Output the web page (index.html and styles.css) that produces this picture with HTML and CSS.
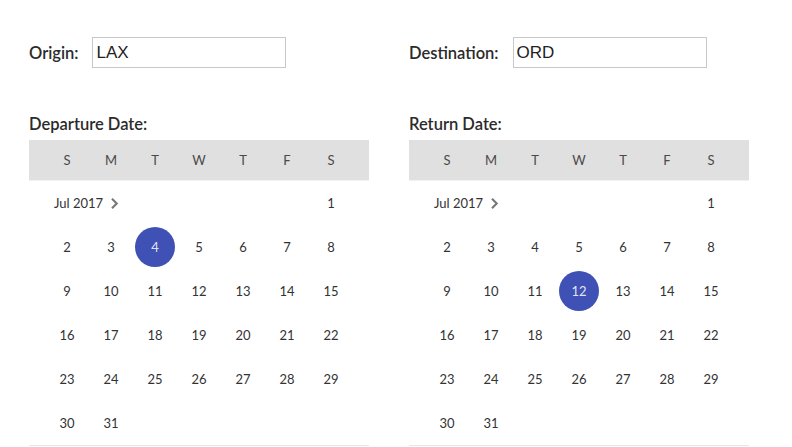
FILE: index.html
```html
<!DOCTYPE html>
<html>
<head>
<meta charset="utf-8">
<link rel="stylesheet" href="styles.css">
</head>
<body>
<div class="page">
  <div class="col">
    <div class="field">
      <label class="field-label">Origin:</label>
      <div class="input">LAX</div>
    </div>
    <div class="date-label">Departure Date:</div>
    <div class="cal">
      <div class="cal-head">
        <span>S</span><span>M</span><span>T</span><span>W</span><span>T</span><span>F</span><span>S</span>
      </div>
      <div class="cal-body">
        <div class="month">Jul 2017 <svg class="chev" width="9" height="13" viewBox="0 0 9 13"><path d="M2 1.8 L6.7 6.5 L2 11.2" fill="none" stroke="#777" stroke-width="2.1"/></svg></div>
        <span>1</span>
        <span>2</span><span>3</span><span class="sel">4</span><span>5</span><span>6</span><span>7</span><span>8</span>
        <span>9</span><span>10</span><span>11</span><span>12</span><span>13</span><span>14</span><span>15</span>
        <span>16</span><span>17</span><span>18</span><span>19</span><span>20</span><span>21</span><span>22</span>
        <span>23</span><span>24</span><span>25</span><span>26</span><span>27</span><span>28</span><span>29</span>
        <span>30</span><span>31</span>
      </div>
    </div>
  </div>
  <div class="col">
    <div class="field">
      <label class="field-label">Destination:</label>
      <div class="input">ORD</div>
    </div>
    <div class="date-label">Return Date:</div>
    <div class="cal">
      <div class="cal-head">
        <span>S</span><span>M</span><span>T</span><span>W</span><span>T</span><span>F</span><span>S</span>
      </div>
      <div class="cal-body">
        <div class="month">Jul 2017 <svg class="chev" width="9" height="13" viewBox="0 0 9 13"><path d="M2 1.8 L6.7 6.5 L2 11.2" fill="none" stroke="#777" stroke-width="2.1"/></svg></div>
        <span>1</span>
        <span>2</span><span>3</span><span>4</span><span>5</span><span>6</span><span>7</span><span>8</span>
        <span>9</span><span>10</span><span>11</span><span class="sel">12</span><span>13</span><span>14</span><span>15</span>
        <span>16</span><span>17</span><span>18</span><span>19</span><span>20</span><span>21</span><span>22</span>
        <span>23</span><span>24</span><span>25</span><span>26</span><span>27</span><span>28</span><span>29</span>
        <span>30</span><span>31</span>
      </div>
    </div>
  </div>
</div>
</body>
</html>
```

FILE: styles.css
```css
html, body {
  margin: 0;
  padding: 0;
  background: #fff;
}
body {
  font-family: Lato, "Noto Sans", sans-serif;
  color: #333;
  overflow: hidden;
}
.page {
  display: grid;
  grid-template-columns: 340px 340px;
  column-gap: 40px;
  padding: 37px 0 0 29px;
}
.field {
  display: flex;
  align-items: center;
  gap: 14px;
  height: 31px;
}
.field-label {
  font-size: 16.5px;
  font-weight: 600;
  color: #2b2b2b;
}
.input {
  box-sizing: border-box;
  width: 194px;
  height: 31px;
  border: 1px solid #c8c8c8;
  padding: 0 3px;
  font-family: "Liberation Sans", Arial, sans-serif;
  font-size: 17px;
  line-height: 29px;
  color: #222;
}
.date-label {
  margin-top: 46px;
  height: 20px;
  line-height: 20px;
  margin-bottom: 6px;
  font-size: 16.5px;
  font-weight: 600;
  color: #2b2b2b;
}
.cal {
  width: 340px;
}
.cal-head {
  display: grid;
  grid-template-columns: repeat(7, 44px);
  padding: 0 16px;
  height: 40px;
  align-items: center;
  background: #e0e0e0;
  border-bottom: 1px solid #f2f2f2;
  font-size: 13px;
  color: #4a4a4a;
}
.cal-head span {
  text-align: center;
}
.cal-body {
  display: grid;
  grid-template-columns: repeat(7, 44px);
  grid-auto-rows: 44px;
  padding: 0 16px;
  border-bottom: 1px solid #e6e6e6;
  font-size: 13px;
  color: #333;
}
.cal-body span {
  display: flex;
  align-items: center;
  justify-content: center;
}
.cal-body .sel {
  width: 40px;
  height: 40px;
  margin: 2px;
  border-radius: 50%;
  background: #3f51b5;
  color: rgba(255, 255, 255, 0.87);
}
.month {
  grid-column: span 6;
  display: flex;
  align-items: center;
  gap: 7px;
  padding-left: 9px;
  font-size: 13px;
  color: #333;
}
.chev {
  display: block;
}
```
